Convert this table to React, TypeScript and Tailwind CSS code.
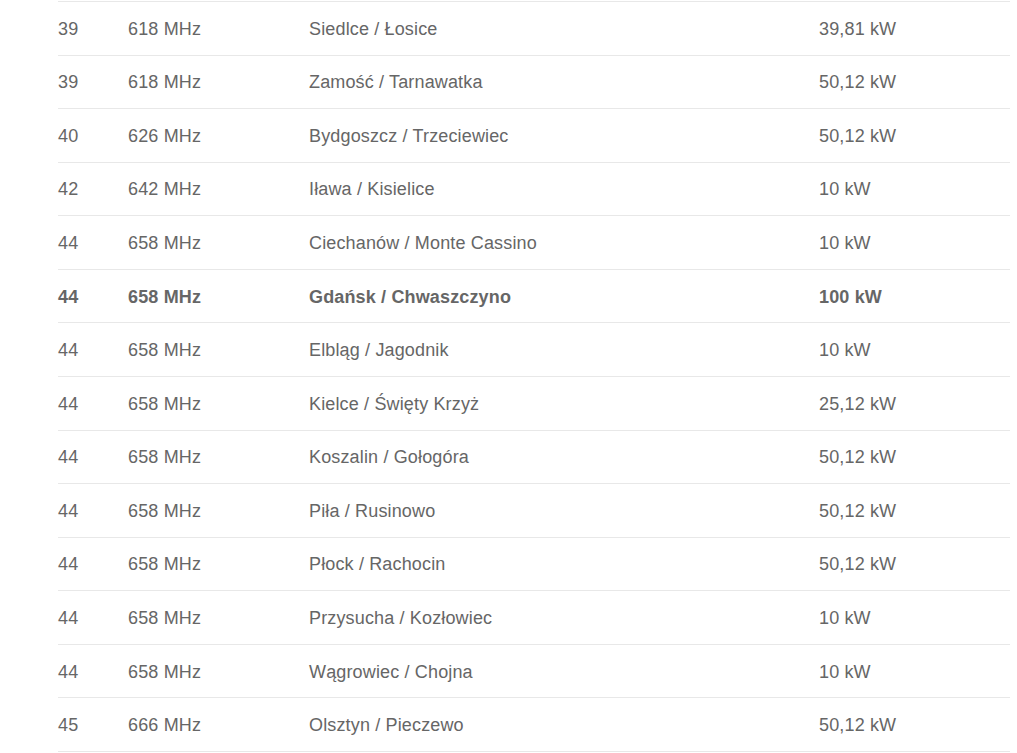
import React from 'react';

type Row = { ch: string; freq: string; place: string; power: string; bold?: boolean };

const ROWS: Row[] = [
  { ch: '39', freq: '618 MHz', place: 'Siedlce / Łosice', power: '39,81 kW' },
  { ch: '39', freq: '618 MHz', place: 'Zamość / Tarnawatka', power: '50,12 kW' },
  { ch: '40', freq: '626 MHz', place: 'Bydgoszcz / Trzeciewiec', power: '50,12 kW' },
  { ch: '42', freq: '642 MHz', place: 'Iława / Kisielice', power: '10 kW' },
  { ch: '44', freq: '658 MHz', place: 'Ciechanów / Monte Cassino', power: '10 kW' },
  { ch: '44', freq: '658 MHz', place: 'Gdańsk / Chwaszczyno', power: '100 kW', bold: true },
  { ch: '44', freq: '658 MHz', place: 'Elbląg / Jagodnik', power: '10 kW' },
  { ch: '44', freq: '658 MHz', place: 'Kielce / Święty Krzyż', power: '25,12 kW' },
  { ch: '44', freq: '658 MHz', place: 'Koszalin / Gołogóra', power: '50,12 kW' },
  { ch: '44', freq: '658 MHz', place: 'Piła / Rusinowo', power: '50,12 kW' },
  { ch: '44', freq: '658 MHz', place: 'Płock / Rachocin', power: '50,12 kW' },
  { ch: '44', freq: '658 MHz', place: 'Przysucha / Kozłowiec', power: '10 kW' },
  { ch: '44', freq: '658 MHz', place: 'Wągrowiec / Chojna', power: '10 kW' },
  { ch: '45', freq: '666 MHz', place: 'Olsztyn / Pieczewo', power: '50,12 kW' },
];

const App: React.FC = () => {
  return (
    <div className="min-h-screen w-full bg-white pt-[1px] pl-[58px] pr-[7px] font-['Liberation_Sans',Arial,sans-serif] text-[18px] tracking-[0.15px] text-[#666666]">
      <div className="border-b border-[#e8e8e8]">
        {ROWS.map((r, i) => (
          <div
            key={i}
            className={`grid h-[53.57px] grid-cols-[70px_181px_510px_1fr] items-center border-t border-[#e8e8e8] pt-[2px] ${r.bold ? 'font-bold' : ''}`}
          >
            <span>{r.ch}</span>
            <span>{r.freq}</span>
            <span>{r.place}</span>
            <span>{r.power}</span>
          </div>
        ))}
      </div>
    </div>
  );
};

export default App;
